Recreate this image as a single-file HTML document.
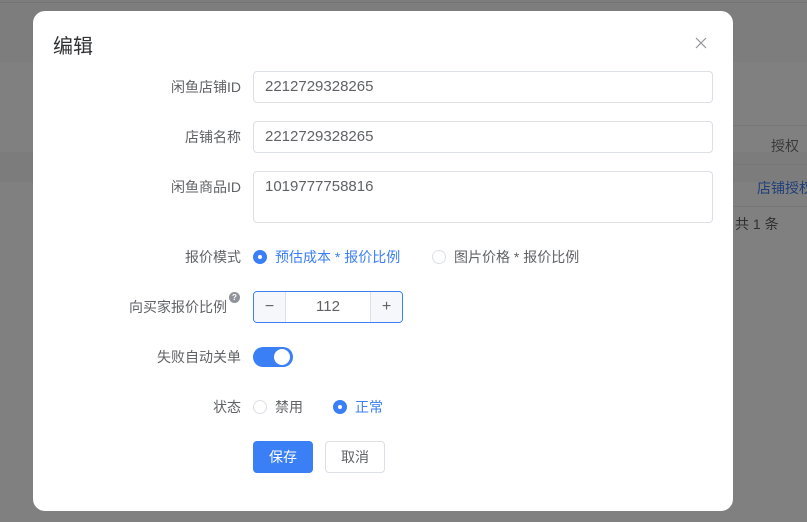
<!DOCTYPE html><html><head><meta charset="utf-8"><style>
*{box-sizing:border-box;margin:0;padding:0}
body{width:807px;height:522px;overflow:hidden;position:relative;background:#808080;font-family:"Liberation Sans","Noto Sans CJK SC",sans-serif;font-size:14px;color:#606266}
.bg{position:absolute;white-space:nowrap}
.dlg{position:absolute;left:33px;top:11px;width:700px;height:500px;background:#fff;border-radius:12px}
.t{position:absolute;left:20px;top:19px;font-size:20px;color:#303133}
.x{position:absolute;left:660px;top:24px;width:16px;height:16px}
.lb{position:absolute;right:492px;text-align:right;color:#606266;font-size:14px;white-space:nowrap}
.in{position:absolute;left:220px;width:460px;height:32px;border:1px solid #dcdfe6;border-radius:4px;padding-left:11px;line-height:30px;color:#606266;font-size:15px}
.rad{position:absolute;width:14px;height:14px;border-radius:50%;border:1px solid #dcdfe6;background:#fff}
.rad.on{background:#3a7ff6;border-color:#3a7ff6}
.rad.on:after{content:"";position:absolute;left:4px;top:4px;width:4px;height:4px;border-radius:50%;background:#fff}
.rt{position:absolute;font-size:14px;white-space:nowrap}
</style></head><body>
<div class="bg" style="left:0;top:0;width:807px;height:62px;background:#7d7d7d"></div>
<div class="bg" style="left:0;top:2px;width:807px;height:1px;background:#737373"></div>
<div class="bg" style="left:0;top:152px;width:807px;height:30px;background:#7c7c7c"></div>
<div class="bg" style="left:733px;top:125px;width:74px;height:1px;background:#777"></div>
<div class="bg" style="left:733px;top:164px;width:74px;height:1px;background:#777"></div>
<div class="bg" style="left:733px;top:206px;width:74px;height:1px;background:#777"></div>
<div class="bg" style="left:771px;top:136px;color:#3a3a3a;font-size:14px">授权</div>
<div class="bg" style="left:757px;top:178px;color:#203f78;font-size:14px">店铺授权</div>
<div class="bg" style="left:735px;top:214px;color:#303030;font-size:14px">共 1 条</div>
<div class="dlg">
<div class="t">编辑</div>
<svg class="x" viewBox="0 0 16 16"><path d="M3 3L13 13M13 3L3 13" stroke="#909399" stroke-width="1.2"/></svg>
<div class="lb" style="top:66px">闲鱼店铺ID</div><div class="in" style="top:60px">2212729328265</div>
<div class="lb" style="top:116px">店铺名称</div><div class="in" style="top:110px">2212729328265</div>
<div class="lb" style="top:166px">闲鱼商品ID</div><div class="in" style="top:160px;height:52px">1019777758816</div>
<div class="lb" style="top:236px">报价模式</div>
<div class="rad on" style="left:220px;top:239px"></div><div class="rt" style="left:242px;top:236px;color:#3a7ff6">预估成本 * 报价比例</div>
<div class="rad" style="left:399px;top:239px"></div><div class="rt" style="left:421px;top:236px">图片价格 * 报价比例</div>
<div class="lb" style="top:286px;right:506px">向买家报价比例</div>
<div style="position:absolute;left:196px;top:281px;width:11px;height:11px;border-radius:50%;background:#909399;color:#fff;font-size:8px;line-height:11px;text-align:center;font-weight:bold">?</div>
<div style="position:absolute;left:220px;top:280px;width:150px;height:32px;border:1px solid #3a7ff6;border-radius:4px;overflow:hidden">
<div style="position:absolute;left:0;top:0;width:32px;height:30px;background:#f5f7fa;border-right:1px solid #dcdfe6;text-align:center;line-height:30px;font-size:16px">−</div>
<div style="position:absolute;left:32px;right:32px;top:0;text-align:center;line-height:30px;color:#606266;font-size:15px">112</div>
<div style="position:absolute;right:0;top:0;width:32px;height:30px;background:#f5f7fa;border-left:1px solid #dcdfe6;text-align:center;line-height:30px;font-size:16px">+</div>
</div>
<div class="lb" style="top:336px">失败自动关单</div>
<div style="position:absolute;left:220px;top:336px;width:40px;height:20px;border-radius:10px;background:#3a7ff6"><div style="position:absolute;left:21px;top:2px;width:16px;height:16px;border-radius:50%;background:#fff"></div></div>
<div class="lb" style="top:386px">状态</div>
<div class="rad" style="left:220px;top:389px"></div><div class="rt" style="left:242px;top:386px">禁用</div>
<div class="rad on" style="left:300px;top:389px"></div><div class="rt" style="left:322px;top:386px;color:#3a7ff6">正常</div>
<div style="position:absolute;left:220px;top:430px;width:60px;height:32px;background:#3a7ff6;border-radius:4px;color:#fff;text-align:center;line-height:32px">保存</div>
<div style="position:absolute;left:292px;top:430px;width:60px;height:32px;border:1px solid #dcdfe6;border-radius:4px;text-align:center;line-height:30px">取消</div>
</div>
</body></html>
